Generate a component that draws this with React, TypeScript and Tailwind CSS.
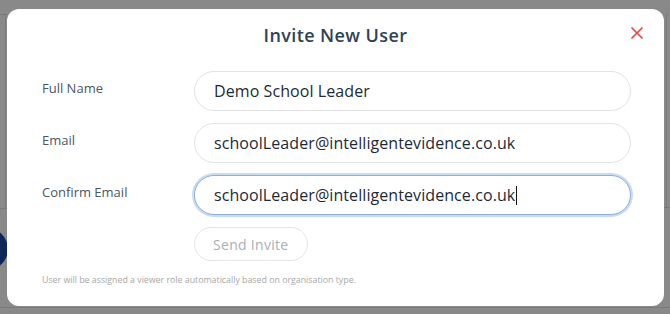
import React from 'react';

const font = { fontFamily: '"Open Sans", "Noto Sans", sans-serif' };

const Field: React.FC<{ label: string; value: string; focused?: boolean }> = ({ label, value, focused }) => (
  <div className="flex items-start">
    <label className="w-[152px] shrink-0 pt-[8px] text-[13px] text-[#4a5568]">{label}</label>
    <div
      className={`flex h-[40px] w-[437px] items-center rounded-full border bg-white pl-[19px] text-[16px] tracking-[0.08px] text-[#1c2a3a] ${
        focused ? 'border-[#8eaee0] shadow-[0_0_0_2px_#c9dcf5]' : 'border-[#e2e2e2]'
      }`}
    >
      {value}
      {focused && <span className="ml-px inline-block h-[19px] w-px bg-[#111]" />}
    </div>
  </div>
);

export default function App() {
  return (
    <div className="relative h-[314px] w-[670px] overflow-hidden bg-[#898989] pl-[7px] pt-[9px]" style={font}>
      {/* page behind the overlay */}
      <div className="absolute left-0 top-[14px] h-px w-[7px] bg-[#7a7a7a]" />
      <div className="absolute left-[5px] top-[14px] h-[194px] w-px bg-[#7a7a7a]" />
      <div className="absolute left-0 top-[208px] h-px w-[7px] bg-[#7a7a7a]" />
      <div className="absolute left-[-34px] top-[228px] h-[42px] w-[42px] rounded-full bg-[#0c2658]" />
      <div className="absolute right-[3px] top-[14px] h-[193px] w-px bg-[#7a7a7a]" />
      <div className="absolute right-0 top-[207px] h-px w-[6px] bg-[#7a7a7a]" />
      <div className="absolute bottom-[6px] left-0 h-px w-full bg-[#7a7a7a]" />

      <div className="relative h-[297px] w-[657px] rounded-[12px] bg-white">
        <div className="relative flex h-[52px] items-center justify-center">
          <h2 className="text-[18px] font-semibold tracking-[0.4px] text-[#2f4358]">Invite New User</h2>
          <button className="absolute right-[20px] top-[17px] text-[#e8413f]">
            <svg width="14" height="14" viewBox="0 0 14 14" fill="none" stroke="currentColor" strokeWidth="1.6">
              <path d="M1.5 1.5l11 11M12.5 1.5l-11 11" />
            </svg>
          </button>
        </div>
        <div className="flex flex-col gap-[11px] pl-[35px] pt-[10px]">
          <div className="flex flex-col gap-[12px]">
            <Field label="Full Name" value="Demo School Leader" />
            <Field label="Email" value="schoolLeader@intelligentevidence.co.uk" />
            <Field label="Confirm Email" value="schoolLeader@intelligentevidence.co.uk" focused />
          </div>
          <div className="pl-[152px] pt-[1px]">
            <button className="h-[34px] rounded-full border border-[#e6e6e6] px-[18px] text-[14px] tracking-[0.3px] text-[#a9b0b9]">
              Send Invite
            </button>
          </div>
          <p className="pt-[2px] text-[8.8px] text-[#a8a8a8]">
            User will be assigned a viewer role automatically based on organisation type.
          </p>
        </div>
      </div>
    </div>
  );
}
